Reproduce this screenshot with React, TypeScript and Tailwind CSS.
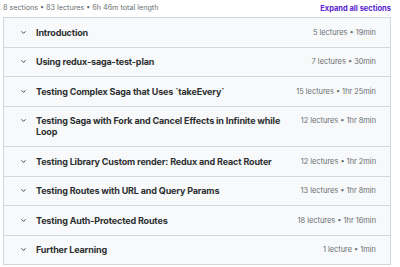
import { ChevronDown } from "lucide-react";

const sections = [
    { title: "Introduction", meta: "5 lectures • 19min" },
    { title: "Using redux-saga-test-plan", meta: "7 lectures • 30min" },
    { title: "Testing Complex Saga that Uses `takeEvery`", meta: "15 lectures • 1hr 25min" },
    { title: "Testing Saga with Fork and Cancel Effects in Infinite while Loop", meta: "12 lectures • 1hr 8min" },
    { title: "Testing Library Custom render: Redux and React Router", meta: "12 lectures • 1hr 2min" },
    { title: "Testing Routes with URL and Query Params", meta: "13 lectures • 1hr 8min" },
    { title: "Testing Auth-Protected Routes", meta: "18 lectures • 1hr 16min" },
    { title: "Further Learning", meta: "1 lecture • 1min" },
];

const App = () => {
    return (
        <div className="h-[267px] w-[400px] overflow-hidden bg-white px-[3px] font-['Inter',sans-serif] text-[#2d2f31]">
            {/* header */}
            <div className="flex h-[17px] items-center justify-between">
                <span className="text-[7.2px] text-[#6a6f73]">8 sections • 83 lectures • 6h 46m total length</span>
                <button className="mr-[6px] text-[7.5px] font-bold text-[#5624d0]">Expand all sections</button>
            </div>

            {/* sections */}
            <div className="mr-[6px] border border-[#d1d7dc]">
                {sections.map((s, i) => (
                    <div
                        key={s.title}
                        className={`flex items-start justify-between bg-[#f7f9fa] py-[8.75px] pl-[16px] pr-[14px] ${
                            i > 0 ? "border-t border-[#d1d7dc]" : ""
                        }`}
                    >
                        <div className="flex items-start gap-[9px]">
                            <ChevronDown size={7} strokeWidth={3} className="mt-[2px] shrink-0 text-[#2d2f31]" />
                            <span className="max-w-[255px] text-[9px] font-bold leading-[11px] tracking-[-0.15px]">{s.title}</span>
                        </div>
                        <span className="shrink-0 whitespace-nowrap text-[7.4px] leading-[11px] text-[#6a6f73]">{s.meta}</span>
                    </div>
                ))}
            </div>
        </div>
    );
};

export default App;
